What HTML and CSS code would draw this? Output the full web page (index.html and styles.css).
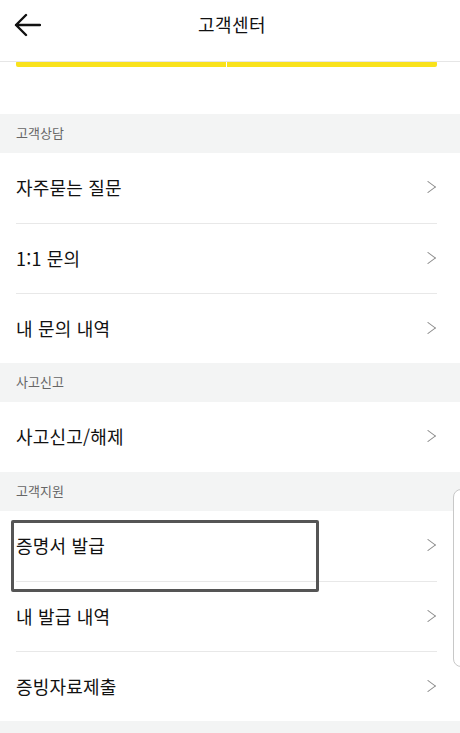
FILE: index.html
```html
<!DOCTYPE html>
<html lang="ko">
<head>
    <meta charset="UTF-8">
    <meta name="viewport" content="width=device-width, initial-scale=1.0">
    <title>고객센터</title>
    <link rel="stylesheet" href="styles.css">
</head>
<body>
    <div class="screen">
        <header class="topbar">
            <button class="back-button" aria-label="뒤로">
                <svg width="28" height="24" viewBox="0 0 28 24">
                    <path d="M13 2 L3 12 L13 22 M3 12 H27" fill="none" stroke="#111" stroke-width="2.4" stroke-linecap="round" stroke-linejoin="round"/>
                </svg>
            </button>
            <h1 class="title">고객센터</h1>
        </header>

        <div class="tabs">
            <span class="tab"></span>
            <span class="tab"></span>
        </div>

        <div class="spacer"></div>

        <!-- 고객상담 -->
        <div class="section-title">고객상담</div>
        <ul class="menu">
            <li class="menu-item">자주묻는 질문<span class="chevron"></span></li>
            <li class="menu-item">1:1 문의<span class="chevron"></span></li>
            <li class="menu-item">내 문의 내역<span class="chevron"></span></li>
        </ul>

        <!-- 사고신고 -->
        <div class="section-title">사고신고</div>
        <ul class="menu">
            <li class="menu-item">사고신고/해제<span class="chevron"></span></li>
        </ul>

        <!-- 고객지원 -->
        <div class="section-title">고객지원</div>
        <ul class="menu">
            <li class="menu-item">증명서 발급<span class="chevron"></span></li>
            <li class="menu-item">내 발급 내역<span class="chevron"></span></li>
            <li class="menu-item">증빙자료제출<span class="chevron"></span></li>
        </ul>

        <div class="section-title"></div>

        <div class="highlight-box"></div>
        <div class="edge-panel"></div>
    </div>
</body>
</html>
```

FILE: styles.css
```css
html, body {
    margin: 0;
    padding: 0;
    background: #fff;
    font-family: "Noto Sans CJK KR", "Noto Sans", sans-serif;
    color: #111;
}

.screen {
    position: relative;
    width: 460px;
    height: 733px;
    overflow: hidden;
}

/* 상단 바 */
.topbar {
    position: relative;
    height: 62px;
    border-bottom: 1px solid #e6e6e6;
    box-sizing: border-box;
    display: flex;
    align-items: center;
    justify-content: center;
}

.back-button {
    position: absolute;
    left: 13px;
    top: 13px;
    padding: 0;
    border: none;
    background: none;
    line-height: 0;
}

.title {
    margin: 0 0 14px 4px;
    font-size: 18px;
    font-weight: 400;
    letter-spacing: 0.5px;
}

/* 노란 탭 표시줄 */
.tabs {
    display: flex;
    gap: 1px;
    margin: -1px 23px 0 16px;
    height: 6px;
}

.tab {
    flex: 1;
    background: #f9e21c;
}

.tab:first-child {
    border-radius: 2px 0 0 2px;
}

.tab:last-child {
    border-radius: 0 2px 2px 0;
}

.spacer {
    height: 47px;
}

.section-title {
    height: 39px;
    line-height: 37px;
    padding-left: 16px;
    background: #f3f4f4;
    font-size: 13px;
    color: #666;
}

.menu {
    list-style: none;
    margin: 0;
    padding: 0;
}

.menu-item {
    position: relative;
    height: 70px;
    margin: 0 23px 0 16px;
    padding-bottom: 2px;
    display: flex;
    align-items: center;
    justify-content: space-between;
    font-size: 18px;
    letter-spacing: 0.2px;
    border-top: 1px solid #e8e8e8;
    box-sizing: border-box;
}

.menu-item:first-child {
    border-top: none;
}

.chevron {
    width: 9px;
    height: 9px;
    margin-right: 4px;
    border-top: 1.3px solid #8a8a8a;
    border-right: 1.3px solid #8a8a8a;
    transform: rotate(45deg) skew(-8deg, -8deg);
}

/* 덧씌워진 표시 */
.highlight-box {
    position: absolute;
    left: 11px;
    top: 520px;
    width: 308px;
    height: 72px;
    border: 3px solid #555;
    border-radius: 2px;
    box-sizing: border-box;
}

.edge-panel {
    position: absolute;
    left: 453px;
    top: 489px;
    width: 40px;
    height: 176px;
    border: 1px solid #c8c8c8;
    border-radius: 8px;
    background: #fff;
}
```
